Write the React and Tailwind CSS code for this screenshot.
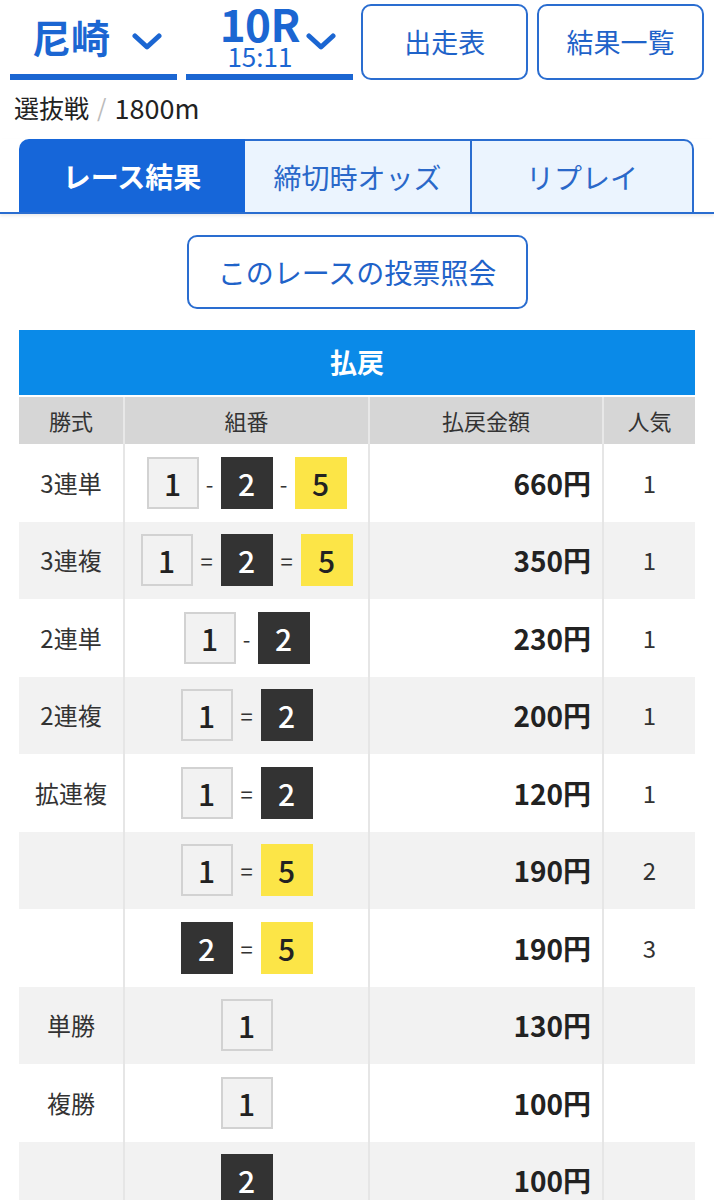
import React from 'react';

const font = { fontFamily: '"Noto Sans CJK JP", "Noto Sans", sans-serif' };

const Chevron = ({ className }) => (
  <svg viewBox="0 0 30 18" className={className} fill="none">
    <polyline points="3,3 15,14 27,3" stroke="#1b66d2" strokeWidth="5" strokeLinecap="round" strokeLinejoin="round" />
  </svg>
);

const rows = [
  { type: '3連単', combo: [1, '-', 2, '-', 5], pay: '660円', pop: '1' },
  { type: '3連複', combo: [1, '=', 2, '=', 5], pay: '350円', pop: '1' },
  { type: '2連単', combo: [1, '-', 2], pay: '230円', pop: '1' },
  { type: '2連複', combo: [1, '=', 2], pay: '200円', pop: '1' },
  { type: '拡連複', combo: [1, '=', 2], pay: '120円', pop: '1' },
  { type: '', combo: [1, '=', 5], pay: '190円', pop: '2' },
  { type: '', combo: [2, '=', 5], pay: '190円', pop: '3' },
  { type: '単勝', combo: [1], pay: '130円', pop: '' },
  { type: '複勝', combo: [1], pay: '100円', pop: '' },
  { type: '', combo: [2], pay: '100円', pop: '' },
];

const boxStyle = {
  1: 'bg-[#f2f2f2] border-2 border-[#d2d2d2] text-[#222]',
  2: 'bg-[#333333] text-white',
  5: 'bg-[#fce547] text-[#222]',
};

const Box = ({ n }) => (
  <div className={`w-[52px] h-[52px] flex items-center justify-center text-[30px] font-medium leading-none ${boxStyle[n]}`}>
    {n}
  </div>
);

const Combo = ({ combo }) => (
  <div className="flex items-center justify-center">
    {combo.map((c, i) =>
      typeof c === 'number' ? (
        <Box key={i} n={c} />
      ) : (
        <span key={i} className={`text-center text-[22px] text-[#333] leading-none ${c === '=' ? 'w-[28px]' : 'w-[22px]'}`}>
          {c}
        </span>
      )
    )}
  </div>
);

const cols = 'grid grid-cols-[104px_243px_232px_1fr] gap-x-[2px]';

export default function App() {
  return (
    <div className="bg-white min-h-[1200px] text-[#222]" style={font}>
      {/* top selectors */}
      <div className="grid grid-cols-4 gap-[8.67px] px-[10px] pt-[4px]">
        <div className="h-[76px] border-b-[6px] border-[#1b66d2] flex items-center pl-[22px] pb-[6px]">
          <span className="text-[39px] font-bold text-[#1b66d2] leading-none">尼崎</span>
          <Chevron className="w-[30px] h-[18px] ml-[22px] mt-[12px]" />
        </div>
        <div className="h-[76px] border-b-[6px] border-[#1b66d2] flex items-start pl-[34px]">
          <div className="flex flex-col items-center">
            <span className="text-[44px] font-bold text-[#1b66d2] leading-[38px] tracking-[-0.5px]">10R</span>
            <span className="text-[26px] text-[#1b66d2] leading-[26px] mt-[1px]">15:11</span>
          </div>
          <Chevron className="w-[30px] h-[18px] ml-[6px] mt-[29px]" />
        </div>
        <button className="h-[76px] border-2 border-[#2a6dd0] rounded-[10px] text-[27px] text-[#1f63c9] flex items-center justify-center">
          出走表
        </button>
        <button className="h-[76px] border-2 border-[#2a6dd0] rounded-[10px] text-[27px] text-[#1f63c9] flex items-center justify-center">
          結果一覧
        </button>
      </div>

      <div className="px-[14px] mt-[14px] h-[26px] flex items-center text-[25px] leading-none text-[#222]">
        <span>選抜戦</span>
        <span className="text-[#bbb] text-[24px] mx-[8px]">/</span>
        <span className="text-[27px]">1800m</span>
      </div>

      {/* tabs */}
      <div className="mt-[19px] border-b-2 border-[#2a6dd0] shadow-[0_2px_3px_rgba(0,0,0,0.08)] px-[19px]">
        <div className="grid grid-cols-[226px_225px_224px]">
          <div className="h-[73px] bg-[#1666d9] rounded-tl-[10px] flex items-center justify-center text-white text-[28px] font-bold">
            レース結果
          </div>
          <div className="h-[73px] bg-[#ebf4fe] border-t-2 border-[#2a6dd0] flex items-center justify-center text-[#2a68c9] text-[28px]">
            締切時オッズ
          </div>
          <div className="h-[73px] bg-[#ebf4fe] border-t-2 border-x-2 border-[#2a6dd0] rounded-tr-[10px] flex items-center justify-center text-[#2a68c9] text-[28px]">
            リプレイ
          </div>
        </div>
      </div>

      <div className="flex justify-center mt-[21px]">
        <button className="w-[341px] h-[74px] border-2 border-[#2a6dd0] rounded-[10px] text-[28px] text-[#1f63c9] flex items-center justify-center">
          このレースの投票照会
        </button>
      </div>

      {/* payout table */}
      <div className="mx-[19px] mt-[21px]">
        <div className="h-[65px] bg-[#0a8ae8] flex items-center justify-center text-white text-[27px] font-bold">
          払戻
        </div>
        <div className={`${cols} mt-[2px] h-[47px] text-[22px] text-[#333] bg-[#e8e8e8]`}>
          <div className="bg-[#d6d6d6] flex items-center justify-center">勝式</div>
          <div className="bg-[#d6d6d6] flex items-center justify-center">組番</div>
          <div className="bg-[#d6d6d6] flex items-center justify-center">払戻金額</div>
          <div className="bg-[#d6d6d6] flex items-center justify-center">人気</div>
        </div>
        {rows.map((r, i) => {
          const bg = i % 2 === 0 ? 'bg-white' : 'bg-[#f2f2f2]';
          return (
            <div key={i} className={`${cols} h-[77.5px] bg-[#e6e6e6]`}>
              <div className={`${bg} flex items-center justify-center text-[24px] text-[#333]`}>{r.type}</div>
              <div className={`${bg} flex items-center justify-center`}>
                <Combo combo={r.combo} />
              </div>
              <div className={`${bg} flex items-center justify-end pr-[11px] text-[28px] font-bold text-[#222]`}>{r.pay}</div>
              <div className={`${bg} flex items-center justify-center text-[24px] text-[#333]`}>{r.pop}</div>
            </div>
          );
        })}
      </div>
    </div>
  );
}
